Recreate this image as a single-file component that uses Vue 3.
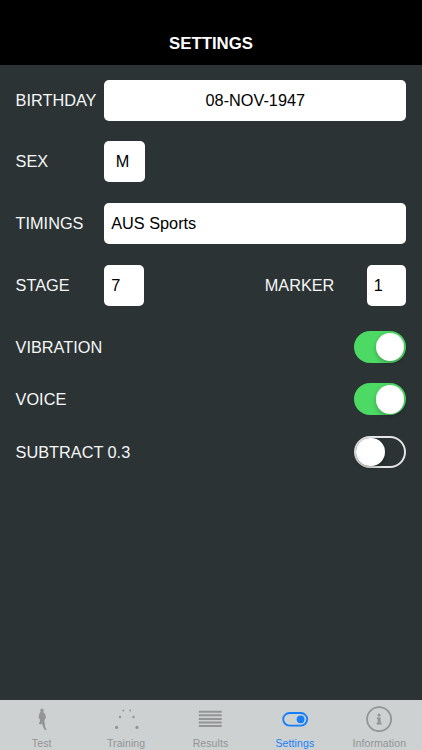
<template>
	<div class="screen">
		<header class="header">
			<h1 class="title">SETTINGS</h1>
		</header>

		<main class="form">
			<div class="row">
				<label class="label">BIRTHDAY</label>
				<div class="field field-date">{{ settings.birthday }}</div>
			</div>
			<div class="row">
				<label class="label">SEX</label>
				<div class="field field-sex">{{ settings.sex }}</div>
			</div>
			<div class="row">
				<label class="label">TIMINGS</label>
				<div class="field">{{ settings.timings }}</div>
			</div>
			<div class="row">
				<label class="label">STAGE</label>
				<div class="field field-number">{{ settings.stage }}</div>
				<label class="label label-marker">MARKER</label>
				<div class="field field-number">{{ settings.marker }}</div>
			</div>

			<div class="toggles">
				<div v-for="item in toggles" :key="item.label" class="toggle-row">
					<span class="toggle-label">{{ item.label }}</span>
					<button
						class="switch"
						:class="{ on: item.on }"
						:aria-label="item.label"
						@click="item.on = !item.on"
					>
						<span class="knob"></span>
					</button>
				</div>
			</div>
		</main>

		<nav class="tabs">
			<button
				v-for="tab in tabs"
				:key="tab"
				class="tab"
				:class="{ active: tab === activeTab }"
				@click="activeTab = tab"
			>
				<svg class="icon" viewBox="0 0 28 28">
					<g v-if="tab === 'Test'" fill="currentColor">
						<ellipse cx="14" cy="5.4" rx="1.7" ry="2" />
						<path d="M12.2 7 15.6 7.2 17.2 9.2 18 12.4 16.8 14.4 16.4 16.4 16.9 19.4 17.1 21.8 18.6 24.6 17 25.2 14.9 21.6 14 18.6 12.4 19.4 10.8 18.8 12 16 11.8 13.8 10.6 13.2 10.9 10Z" />
					</g>
					<g v-else-if="tab === 'Training'" fill="currentColor">
						<circle cx="11.4" cy="5.5" r=".9" />
						<circle cx="18.2" cy="5.5" r=".9" />
						<circle cx="8" cy="12" r="1.2" />
						<circle cx="21.5" cy="12" r="1.2" />
						<circle cx="4.6" cy="22.4" r="1.6" />
						<circle cx="25" cy="22.4" r="1.6" />
					</g>
					<path
						v-else-if="tab === 'Results'"
						d="M2.8 6.7H25.7M2.8 10.3H25.7M2.8 13.9H25.7M2.8 17.5H25.7M2.8 21.1H25.7"
						stroke="currentColor"
						stroke-width="2"
					/>
					<g v-else-if="tab === 'Settings'">
						<rect x="2.2" y="8" width="24" height="12.6" rx="6.3" fill="none" stroke="currentColor" stroke-width="1.8" />
						<circle cx="19.6" cy="14.3" r="3.9" fill="currentColor" />
					</g>
					<g v-else>
						<circle cx="14.1" cy="14.2" r="12" fill="none" stroke="currentColor" stroke-width="1.8" />
						<circle cx="14" cy="10.1" r="1.6" fill="currentColor" />
						<path d="M11.8 12.5H15.6V17.7H16.6V19.4H11.6V17.7H12.7V14H11.8Z" fill="currentColor" />
					</g>
				</svg>
				<span class="tab-label">{{ tab }}</span>
			</button>
		</nav>
	</div>
</template>

<script setup>
	import { reactive, ref } from 'vue'

	const settings = reactive({
		birthday: '08-NOV-1947',
		sex: 'M',
		timings: 'AUS Sports',
		stage: 7,
		marker: 1,
	})

	const toggles = ref([
		{ label: 'VIBRATION', on: true },
		{ label: 'VOICE', on: true },
		{ label: 'SUBTRACT 0.3', on: false },
	])

	const tabs = ['Test', 'Training', 'Results', 'Settings', 'Information']
	const activeTab = ref('Settings')
</script>

<style>
	body {
		margin: 0;
		background-color: #2c3335;
	}
</style>

<style scoped>
	.screen {
		display: flex;
		flex-direction: column;
		height: 100vh;
		background-color: #2c3335;
		color: #f5f7f7;
		font-family: 'Liberation Sans', Arial, sans-serif;
		font-size: 16.3px;
		line-height: 20px;
	}

	.header {
		box-sizing: border-box;
		height: 65px;
		padding-top: 34px;
		background-color: #000;
		text-align: center;
	}

	.title {
		margin: 0;
		color: #fff;
		font-size: 16.8px;
		font-weight: bold;
		line-height: 20px;
	}

	.form {
		flex: 1;
		display: flex;
		flex-direction: column;
		gap: 20.8px;
		padding: 14.6px 15.6px 0;
	}

	.row {
		display: flex;
		align-items: center;
	}

	.label {
		flex: none;
		width: 88.6px;
		margin-top: -1px;
	}

	.label-marker {
		width: 102px;
		margin-left: auto;
	}

	.field {
		box-sizing: border-box;
		flex: 1;
		height: 41px;
		padding: 0 7px;
		border-radius: 5px;
		background-color: #fff;
		color: #000;
		line-height: 40px;
	}

	.field-date {
		text-align: center;
	}

	.field-sex {
		flex: none;
		width: 41px;
		padding: 0 4.5px 0 0;
		text-align: center;
	}

	.field-number {
		flex: none;
		width: 39.7px;
	}

	.toggles {
		display: flex;
		flex-direction: column;
		gap: 20.4px;
		padding-top: 4.2px;
	}

	.toggle-row {
		display: flex;
		align-items: center;
		justify-content: space-between;
	}

	.switch {
		box-sizing: border-box;
		display: flex;
		align-items: center;
		width: 52.4px;
		height: 32px;
		padding: 0;
		border: 2px solid #e5e5e5;
		border-radius: 16px;
		background-color: transparent;
	}

	.switch.on {
		justify-content: flex-end;
		border-color: #4cd964;
		background-color: #4cd964;
	}

	.knob {
		width: 28.5px;
		height: 28.5px;
		border-radius: 50%;
		background-color: #fff;
		box-shadow: 0 2px 4px rgba(0, 0, 0, 0.25);
	}

	.tabs {
		display: grid;
		grid-template-columns: repeat(5, 1fr);
		height: 50px;
		background-color: #cdd1d2;
	}

	.tab {
		display: flex;
		flex-direction: column;
		align-items: center;
		padding: 5px 1px 0 0;
		border: 0;
		background: none;
		color: #929495;
		font-family: inherit;
	}

	.tab.active {
		color: #147efb;
	}

	.icon {
		width: 28px;
		height: 28px;
	}

	.tab-label {
		margin-top: 4px;
		font-size: 10.5px;
		letter-spacing: 0.1px;
		line-height: 12px;
	}
</style>
